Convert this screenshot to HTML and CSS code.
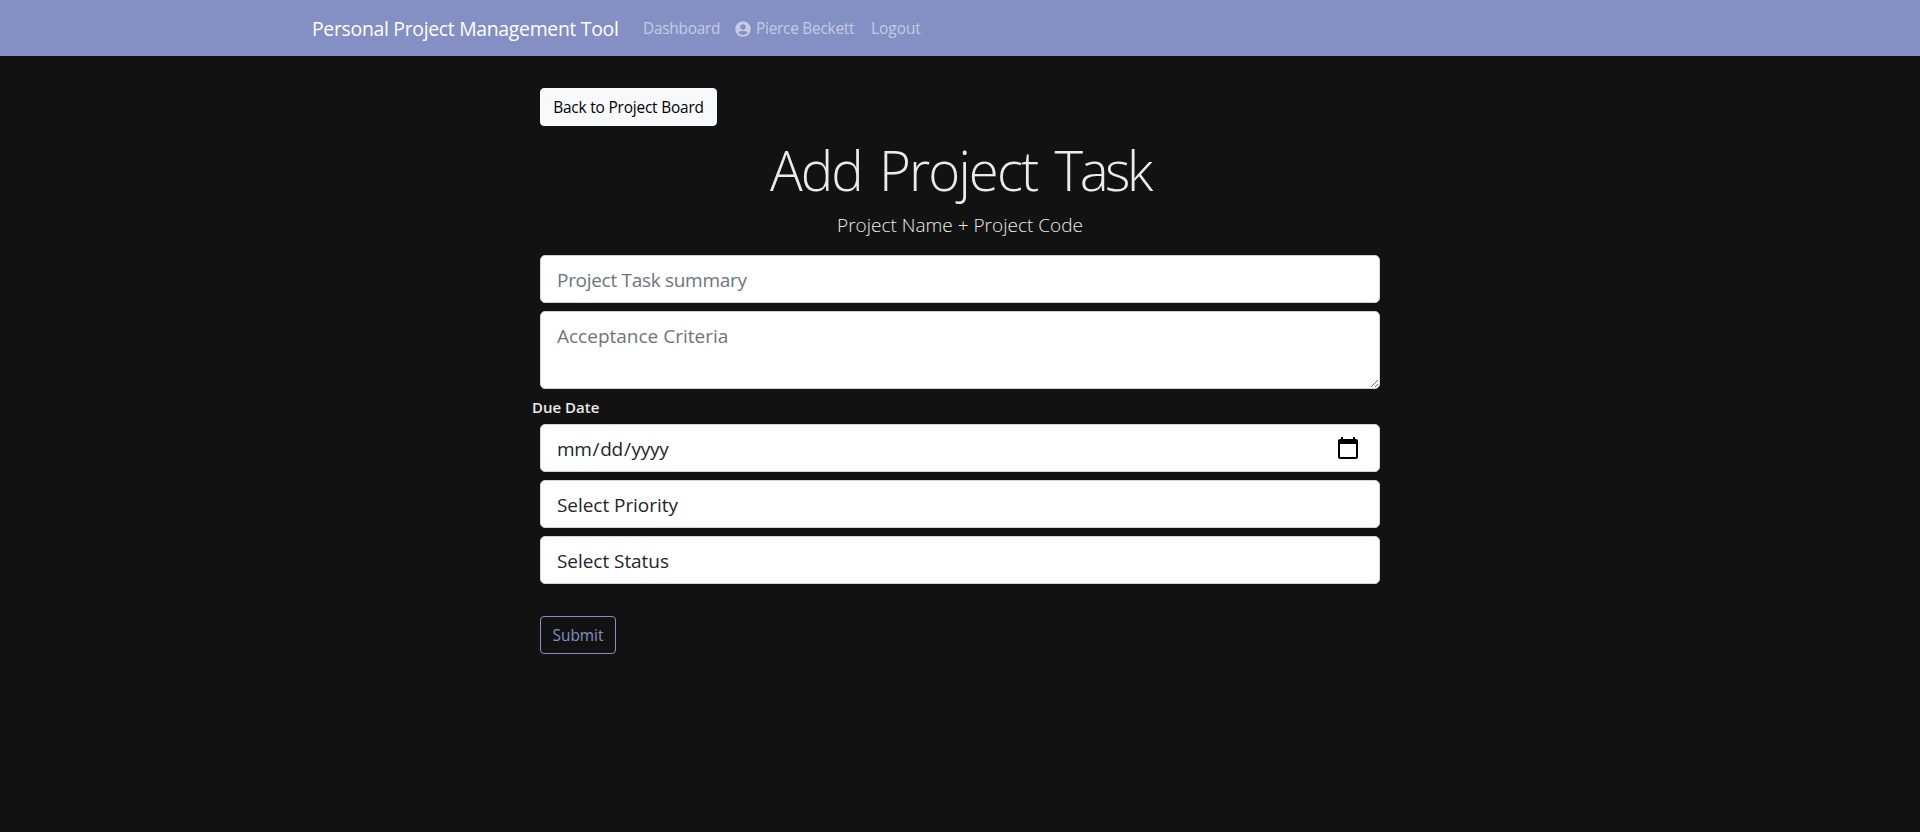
FILE: index.html
```html
<!DOCTYPE html>
<html lang="en">
<head>
<meta charset="utf-8">
<title>Personal Project Management Tool</title>
<link rel="stylesheet" href="styles.css">
</head>
<body>
<nav class="navbar">
  <div class="container">
    <a class="brand">Personal Project Management Tool</a>
    <a class="nav-link dashboard">Dashboard</a>
    <a class="nav-link user"><svg class="user-icon" viewBox="0 0 496 512" aria-hidden="true"><path fill="currentColor" d="M248 8C111 8 0 119 0 256s111 248 248 248 248-111 248-248S385 8 248 8zm0 96c48.600 0 88 39.400 88 88s-39.400 88-88 88-88-39.400-88-88 39.400-88 88-88zm0 344c-58.700 0-111.300-26.600-146.500-68.200 18.800-35.400 55.600-59.800 98.500-59.800 2.400 0 4.800.4 7.100 1.100 13 4.200 26.600 6.900 40.900 6.900 14.300 0 28-2.700 40.900-6.900 2.300-.7 4.700-1.100 7.100-1.100 42.900 0 79.700 24.400 98.500 59.800C359.300 421.400 306.700 448 248 448z"/></svg><span>Pierce Beckett</span></a>
    <a class="nav-link logout">Logout</a>
  </div>
</nav>
<main class="content">
  <a class="btn btn-light">Back to Project Board</a>
  <h1 class="title">Add Project <span class="tight">Task</span></h1>
  <p class="lead">Project Name + Project Code</p>
  <form class="form">
    <input class="control summary" type="text" placeholder="Project Task summary">
    <textarea class="control criteria" placeholder="Acceptance Criteria"></textarea>
    <h6 class="label">Due Date</h6>
    <input class="control date" type="date">
    <select class="control priority"><option>Select Priority</option></select>
    <select class="control status"><option>Select Status</option></select>
    <button class="btn btn-submit" type="button">Submit</button>
  </form>
</main>
</body>
</html>
```
FILE: styles.css
```css
* { box-sizing: border-box; }
body {
  margin: 0;
  min-height: 832px;
  background: #121212;
  color: #ebebeb;
  font: 400 15.4px/24px "Open Sans", "Noto Sans", sans-serif;
}
.navbar { height: 56px; background: #848fc3; }
.container {
  display: flex;
  align-items: center;
  width: 1320px;
  height: 56px;
  margin: 0 auto;
  padding: 2px 12px 0;
  white-space: nowrap;
}
.brand { width: 331px; color: #fff; font-size: 19.4px; line-height: 30px; letter-spacing: -0.3px; }
.nav-link { display: flex; align-items: center; color: rgba(255, 255, 255, .55); letter-spacing: -0.25px; }
.dashboard { width: 92px; }
.user { width: 136px; gap: 5px; }
.user-icon { width: 16px; height: 16px; }
.logout { letter-spacing: 0; }
.content { display: flex; flex-direction: column; width: 840px; margin: 0 auto; padding-top: 32px; }
.btn {
  height: 38px;
  padding: 7px 0 5px;
  border: 1px solid;
  border-radius: 4px;
  font: inherit;
  line-height: 24px;
  text-align: center;
  white-space: nowrap;
}
.btn-light { width: 177px; border-color: #f8f9fa; background: #f8f9fa; color: #000; letter-spacing: -0.18px; }
.title { margin: 11px 0 6px; font-size: 54.5px; font-weight: 300; line-height: 67px; letter-spacing: -1.9px; word-spacing: 5px; text-align: center; }
.tight { letter-spacing: -3.4px; }
.lead { margin: 0 0 15px; font-size: 19px; font-weight: 300; line-height: 30px; text-align: center; }
.form { display: flex; flex-direction: column; }
.control {
  display: block;
  appearance: none;
  width: 100%;
  height: 48px;
  margin: 0 0 8px;
  padding: 9px 16px 7px;
  border: 1px solid #ced4da;
  border-radius: 5px;
  background: #fff;
  color: #212529;
  font: 400 19px/30px "Open Sans", "Noto Sans", sans-serif;
  letter-spacing: -0.3px;
}
.control::placeholder { color: #6c757d; opacity: 1; }
.criteria { height: 78px; resize: vertical; letter-spacing: 0; }
.date { padding-left: 15px; }
.date::-webkit-calendar-picker-indicator { width: 24px; height: 24px; margin-right: 3px; margin-bottom: 3px; padding: 0; background-size: 24px 24px; }
.priority, .status { letter-spacing: -0.05px; }
.label { margin: 1px 0 7px -8px; font-size: 15px; font-weight: 600; line-height: 19px; }
.btn-submit { width: 76px; margin-top: 24px; border-color: #848fc3; background: transparent; color: #848fc3; }
```
